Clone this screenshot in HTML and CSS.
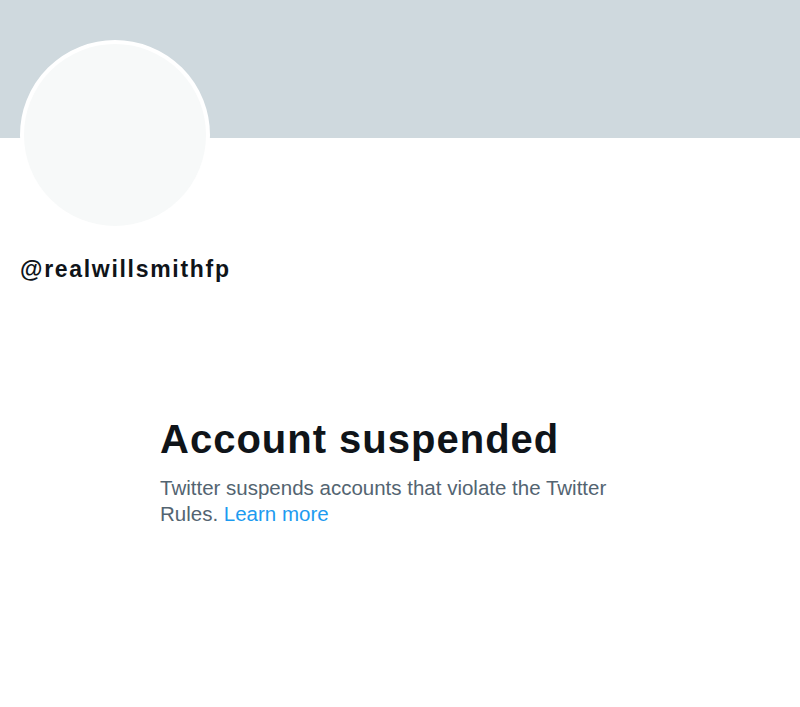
FILE: index.html
```html
<!DOCTYPE html>
<html>
<head>
<meta charset="utf-8">
<link rel="stylesheet" href="styles.css">
</head>
<body>
<div class="page">
  <div class="banner"></div>
  <div class="profile">
    <div class="avatar"></div>
    <div class="handle">@realwillsmithfp</div>
  </div>
  <div class="notice">
    <h1 class="title">Account suspended</h1>
    <p class="desc">Twitter suspends accounts that violate the Twitter Rules. <a class="link" href="#">Learn more</a></p>
  </div>
</div>
</body>
</html>
```
FILE: styles.css
```css
html, body {
  margin: 0;
  padding: 0;
  background: #ffffff;
}
body {
  font-family: "Liberation Sans", Arial, sans-serif;
  width: 800px;
  height: 707px;
  overflow: hidden;
}
.banner {
  height: 138px;
  background: #cfd9de;
}
.profile {
  padding-left: 20px;
  margin-top: -98px;
}
.avatar {
  width: 182px;
  height: 182px;
  border-radius: 50%;
  background: #f7f9f9;
  border: 4px solid #ffffff;
  box-sizing: content-box;
}
.handle {
  margin-top: 26px;
  font-size: 23px;
  font-weight: bold;
  color: #0f1419;
  line-height: 26px;
  letter-spacing: 1.7px;
}
.notice {
  margin-top: 134px;
  padding-left: 160px;
  width: 480px;
}
.title {
  margin: 0;
  font-size: 40px;
  font-weight: bold;
  color: #0f1419;
  line-height: 46px;
  letter-spacing: 1px;
}
.desc {
  margin: 13px 0 0 0;
  font-size: 20.5px;
  line-height: 26px;
  color: #536471;
}
.link {
  color: #1d9bf0;
  text-decoration: none;
}
```
